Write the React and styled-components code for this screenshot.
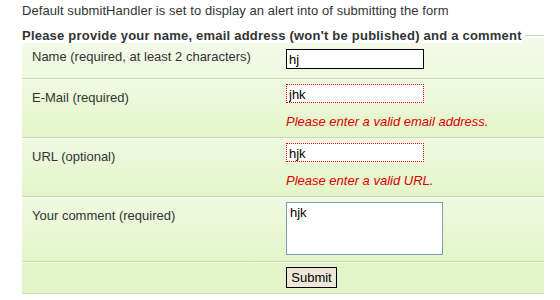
import React from "react";
import styled, { createGlobalStyle } from "styled-components";

const Global = createGlobalStyle`
  html, body { margin: 0; padding: 0; background: #fff; }
  body { font-family: "Liberation Sans", Arial, sans-serif; font-size: 13px; color: #333; }
`;

const Page = styled.div`
  width: 522px;
  padding: 3px 0 0 22px;
`;

const Intro = styled.p`
  margin: 0;
  line-height: 15px;
  letter-spacing: 0.07px;
  color: #333;
`;

const Form = styled.form`
  margin-top: 10px;
`;

const Legend = styled.div`
  position: relative;
  z-index: 1;
  display: flex;
  align-items: center;
  height: 15px;
  font-weight: bold;
  letter-spacing: 0.22px;
  color: #333;
  line-height: 15px;
  &::after {
    content: "";
    flex: 1;
    height: 1px;
    margin-left: 3px;
    background: #c6d6ac;
  }
`;

const LegendText = styled.span`
  background: #fff;
`;

const Rows = styled.div`
  margin-top: -5px;
`;

const Row = styled.div`
  display: grid;
  grid-template-columns: 254px 1fr;
  box-sizing: border-box;
  height: ${(p) => p.$h}px;
  padding-left: 10px;
  background: ${(p) =>
    p.$flat
      ? "#e3f5c8"
      : p.$light
      ? "linear-gradient(#f4faea, #eef8dd)"
      : "linear-gradient(#f0f9e2, #e3f5c8)"};
  border-bottom: 1px solid #cbd9b3;
  box-shadow: inset 0 1px 0 #f6fbec;
`;

const Label = styled.label`
  padding-top: 11px;
  line-height: 15px;
  color: #333;
`;

const Control = styled.div`
  padding-top: ${(p) => p.$top ?? 5}px;
  display: flex;
  flex-direction: column;
  align-items: flex-start;
`;

const Input = styled.input`
  box-sizing: border-box;
  width: 138px;
  height: ${(p) => (p.$focus ? 20 : 19)}px;
  margin: 0;
  padding: 1px 2px 0;
  line-height: 16px;
  font-family: "Liberation Sans", Arial, sans-serif;
  font-size: 13px;
  color: #000;
  background: #fff;
  border: ${(p) => (p.$error ? "1px dotted #dd0000" : "1px solid #000")};
  outline: none;
`;

const Error = styled.span`
  margin-top: 11px;
  font-style: italic;
  color: #d00;
  line-height: 15px;
`;

const TextArea = styled.textarea`
  box-sizing: border-box;
  width: 157px;
  height: 53px;
  margin: 0;
  padding: 2px 3px;
  resize: none;
  font-family: "Liberation Sans", Arial, sans-serif;
  font-size: 13px;
  line-height: 15px;
  color: #000;
  border: 1px solid #7f9db9;
  outline: none;
`;

const Button = styled.button`
  box-sizing: border-box;
  width: 51px;
  height: 21px;
  margin: 0;
  padding: 0;
  font-family: "Liberation Sans", Arial, sans-serif;
  font-size: 13px;
  color: #000;
  background: #ece9d8;
  border: 1px solid #000;
  border-radius: 0;
`;

export default function App() {
  return (
    <>
      <Global />
      <Page>
        <Intro>Default submitHandler is set to display an alert into of submitting the form</Intro>
        <Form onSubmit={(e) => e.preventDefault()}>
          <Legend>
            <LegendText>Please provide your name, email address (won't be published) and a comment</LegendText>
          </Legend>
          <Rows>
            <Row $h={41} $light>
              <Label>Name (required, at least 2 characters)</Label>
              <Control $top={11}>
                <Input $focus defaultValue="hj" />
              </Control>
            </Row>
            <Row $h={59}>
              <Label>E-Mail (required)</Label>
              <Control>
                <Input $error defaultValue="jhk" />
                <Error>Please enter a valid email address.</Error>
              </Control>
            </Row>
            <Row $h={59}>
              <Label>URL (optional)</Label>
              <Control>
                <Input $error defaultValue="hjk" />
                <Error>Please enter a valid URL.</Error>
              </Control>
            </Row>
            <Row $h={65}>
              <Label>Your comment (required)</Label>
              <Control>
                <TextArea defaultValue="hjk" />
              </Control>
            </Row>
            <Row $h={32} $flat>
              <Label />
              <Control>
                <Button type="submit">Submit</Button>
              </Control>
            </Row>
          </Rows>
        </Form>
      </Page>
    </>
  );
}
